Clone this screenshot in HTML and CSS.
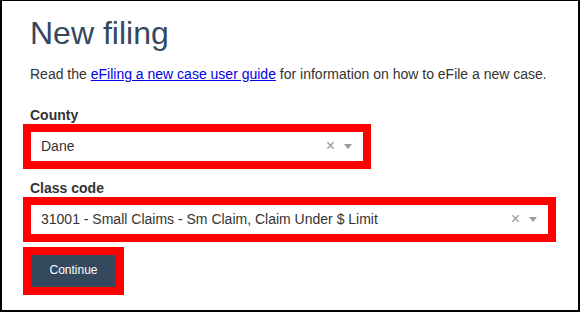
FILE: index.html
```html
<!DOCTYPE html>
<html lang="en">
<head>
    <meta charset="UTF-8">
    <meta name="viewport" content="width=device-width, initial-scale=1.0">
    <title>New filing</title>
    <link rel="stylesheet" href="styles.css">
</head>
<body>

<div class="page">
    <h1 class="title">New filing</h1>
    <p class="intro">Read the <a href="#" class="guide-link">eFiling a new case user guide</a> for information on how to eFile a new case.</p>

    <div class="field">
        <label class="field-label">County</label>
        <div class="select select-county">
            <span class="select-value">Dane</span>
            <span class="select-clear">×</span>
            <span class="select-arrow"></span>
        </div>
    </div>

    <div class="field">
        <label class="field-label">Class code</label>
        <div class="select select-class">
            <span class="select-value">31001 - Small Claims - Sm Claim, Claim Under $ Limit</span>
            <span class="select-clear">×</span>
            <span class="select-arrow"></span>
        </div>
    </div>

    <button class="button">Continue</button>
</div>

</body>
</html>
```

FILE: styles.css
```css
        body {
            font-family: "Liberation Sans", Arial, sans-serif;
            margin: 0;
            background-color: #fff;
            color: #333;
        }
        .page {
            box-sizing: border-box;
            width: 580px;
            height: 312px;
            border-style: solid;
            border-color: #000;
            border-width: 1px 2px 2px 2px;
            padding: 15px 0 0 28px;
        }
        .title {
            margin: 0;
            font-size: 32px;
            line-height: 35px;
            font-weight: normal;
            color: #34495e;
        }
        .intro {
            margin: 13px 0 0 0;
            font-size: 14px;
            line-height: 20px;
        }
        .guide-link {
            color: #00e;
        }
        .field {
            margin-top: 21px;
        }
        .field + .field {
            margin-top: 17px;
        }
        .field-label {
            display: block;
            font-size: 14px;
            line-height: 20px;
            font-weight: bold;
            margin-bottom: 7px;
        }
        .select {
            display: flex;
            align-items: center;
            box-sizing: border-box;
            height: 29px;
            margin-left: 1px;
            padding: 0 11px 2px 10px;
            background-color: #fff;
            outline: 8px solid #f00;
            font-size: 14px;
        }
        .select-county {
            width: 332px;
        }
        .select-class {
            width: 517px;
        }
        .select-value {
            flex: 1;
            line-height: 26px;
        }
        .select-clear {
            color: #999;
            font-size: 16px;
            line-height: 16px;
            margin-right: 9px;
        }
        .select-arrow {
            width: 0;
            height: 0;
            border-style: solid;
            border-width: 5px 4px 0 4px;
            border-color: #999 transparent transparent transparent;
            margin-top: 1px;
        }
        .button {
            display: block;
            width: 85px;
            height: 32px;
            margin: 21px 0 0 1px;
            padding: 0 0 3px 0;
            border: none;
            background-color: #34495e;
            color: #fff;
            font-family: "Liberation Sans", Arial, sans-serif;
            font-size: 12px;
            outline: 8px solid #f00;
            cursor: pointer;
        }
```
